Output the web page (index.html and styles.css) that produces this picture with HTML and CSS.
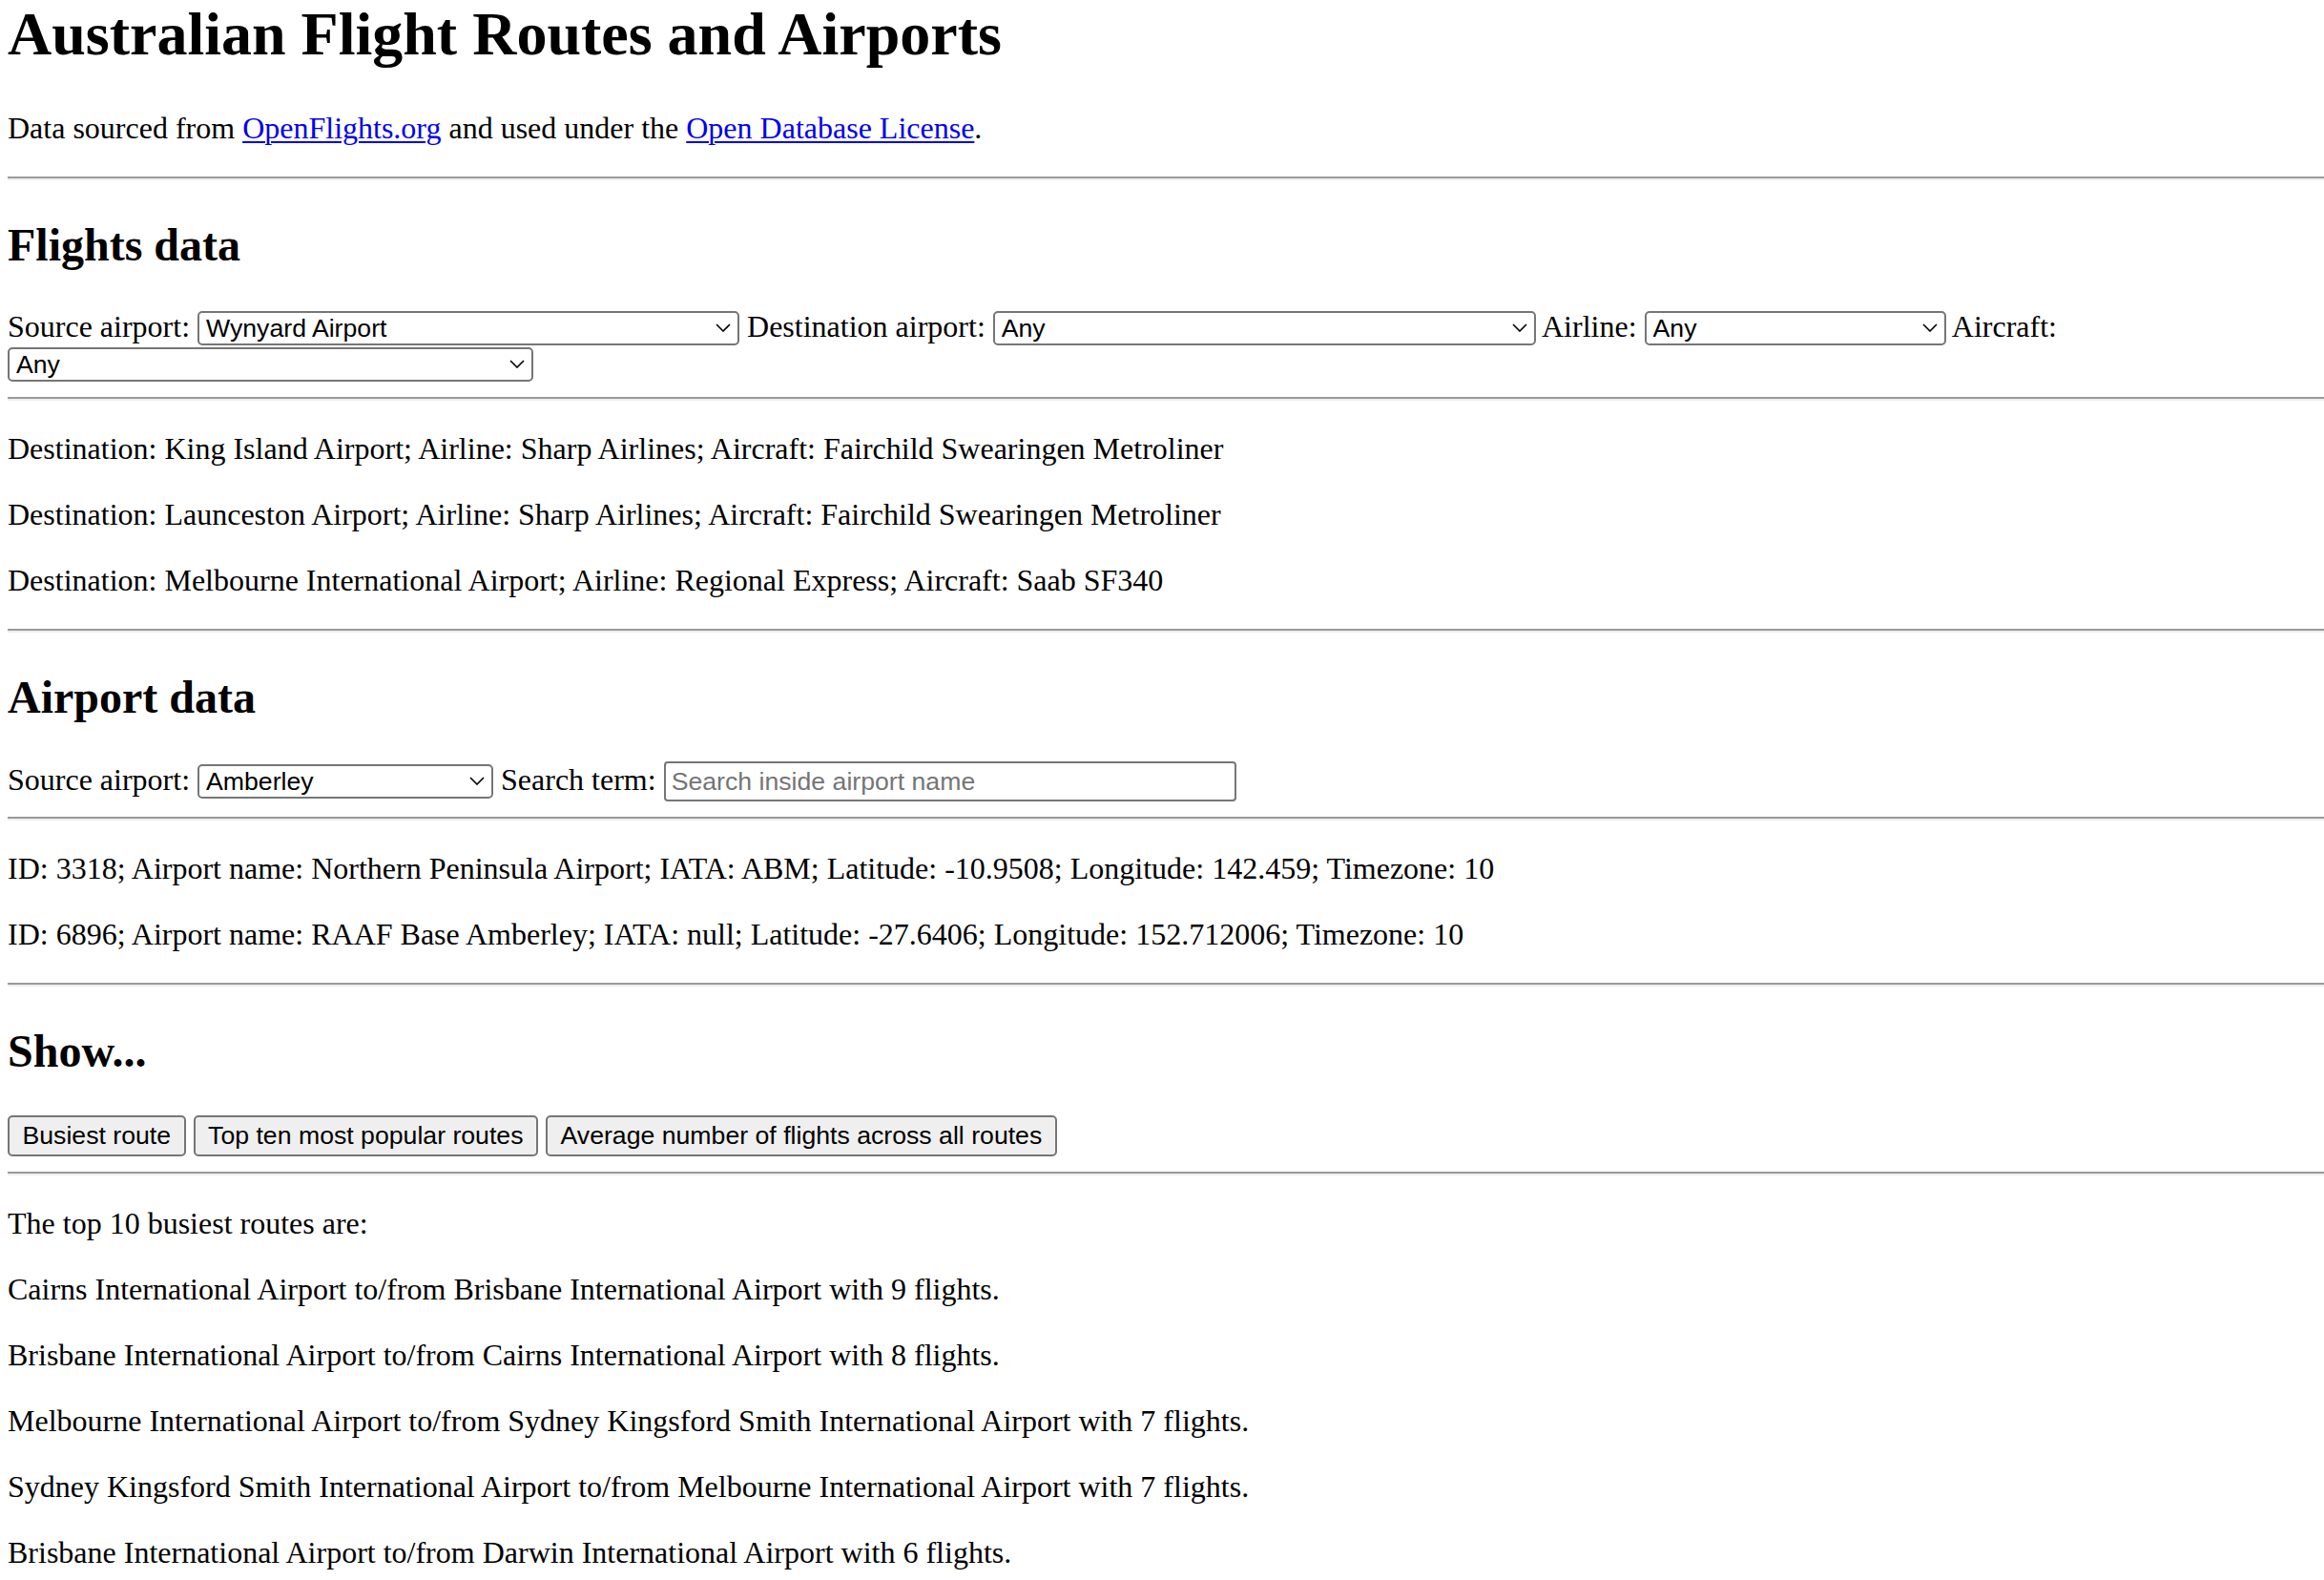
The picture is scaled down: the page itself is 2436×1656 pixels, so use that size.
FILE: index.html
```html
<!DOCTYPE html>
<html lang="en">
<head>
<meta charset="utf-8">
<title>Australian Flight Routes and Airports</title>
<link rel="stylesheet" href="styles.css">
</head>
<body>
<h1 class="title">Australian Flight Routes and Airports</h1>
<p class="para">Data sourced from <a class="link" href="#">OpenFlights.org</a> and used under the <a class="link" href="#">Open Database License</a>.</p>
<hr class="rule">
<h2 class="heading">Flights data</h2>
<div class="controls">
<label class="field">Source airport: <span class="sel w-src"><select class="dropdown"><option>Wynyard Airport</option><option>Any</option></select><svg class="chev" viewBox="0 0 16 9"><path d="M1 1 L8 8 L15 1" fill="none" stroke="#000" stroke-width="1.6"/></svg></span></label>
<label class="field">Destination airport: <span class="sel w-dst"><select class="dropdown"><option>Any</option></select><svg class="chev" viewBox="0 0 16 9"><path d="M1 1 L8 8 L15 1" fill="none" stroke="#000" stroke-width="1.6"/></svg></span></label>
<label class="field">Airline: <span class="sel w-air"><select class="dropdown"><option>Any</option></select><svg class="chev" viewBox="0 0 16 9"><path d="M1 1 L8 8 L15 1" fill="none" stroke="#000" stroke-width="1.6"/></svg></span></label>
<label class="field">Aircraft: <span class="sel w-craft"><select class="dropdown"><option>Any</option></select><svg class="chev" viewBox="0 0 16 9"><path d="M1 1 L8 8 L15 1" fill="none" stroke="#000" stroke-width="1.6"/></svg></span></label>
</div>
<hr class="rule">
<div class="results">
<p class="para">Destination: King Island Airport; Airline: Sharp Airlines; Aircraft: Fairchild Swearingen Metroliner</p>
<p class="para">Destination: Launceston Airport; Airline: Sharp Airlines; Aircraft: Fairchild Swearingen Metroliner</p>
<p class="para">Destination: Melbourne International Airport; Airline: Regional Express; Aircraft: Saab SF340</p>
</div>
<hr class="rule">
<h2 class="heading">Airport data</h2>
<div class="controls">
<label class="field">Source airport: <span class="sel w-amb"><select class="dropdown"><option>Amberley</option></select><svg class="chev" viewBox="0 0 16 9"><path d="M1 1 L8 8 L15 1" fill="none" stroke="#000" stroke-width="1.6"/></svg></span></label>
<label class="field">Search term: <input class="search" type="text" placeholder="Search inside airport name"></label>
</div>
<hr class="rule">
<div class="results">
<p class="para">ID: 3318; Airport name: Northern Peninsula Airport; IATA: ABM; Latitude: -10.9508; Longitude: 142.459; Timezone: 10</p>
<p class="para">ID: 6896; Airport name: RAAF Base Amberley; IATA: null; Latitude: -27.6406; Longitude: 152.712006; Timezone: 10</p>
</div>
<hr class="rule">
<h2 class="heading">Show...</h2>
<div class="controls">
<button class="btn" type="button">Busiest route</button>
<button class="btn" type="button">Top ten most popular routes</button>
<button class="btn" type="button">Average number of flights across all routes</button>
</div>
<hr class="rule">
<div class="results">
<p class="para">The top 10 busiest routes are:</p>
<p class="para">Cairns International Airport to/from Brisbane International Airport with 9 flights.</p>
<p class="para">Brisbane International Airport to/from Cairns International Airport with 8 flights.</p>
<p class="para">Melbourne International Airport to/from Sydney Kingsford Smith International Airport with 7 flights.</p>
<p class="para">Sydney Kingsford Smith International Airport to/from Melbourne International Airport with 7 flights.</p>
<p class="para">Brisbane International Airport to/from Darwin International Airport with 6 flights.</p>
</div>
</body>
</html>
```
FILE: styles.css
```css
html {
  background: #fff;
}

body {
  margin: 0;
  padding: 0 0 0 8px;
  font-family: "Liberation Serif", "Times New Roman", serif;
  font-size: 32px;
  color: #000;
  background: #fff;
}

.title {
  font-size: 64px;
  font-weight: bold;
  margin: -1px 0 43px;
}

.heading {
  font-size: 48px;
  font-weight: bold;
  margin: 40px 0;
}

.para {
  margin: 32px 0;
}

.link {
  color: #0000ee;
  text-decoration: underline;
  text-decoration-thickness: 2px;
  text-underline-offset: 3px;
}

.rule {
  margin: 16px 0;
  height: 0;
  border: 0;
  border-top: 2px solid #9a9a9a;
  border-bottom: 2px solid #eeeeee;
}

.controls {
  margin: 0;
}

.field {
  cursor: default;
}

.sel {
  position: relative;
  display: inline-block;
  vertical-align: baseline;
}

.dropdown {
  -webkit-appearance: none;
  appearance: none;
  box-sizing: border-box;
  width: 100%;
  height: 36px;
  margin: 0;
  padding: 0 34px 0 7px;
  font-family: "Liberation Sans", Arial, sans-serif;
  font-size: 26.67px;
  color: #000;
  background: #fff;
  border: 2px solid #767676;
  border-radius: 5px;
}

.chev {
  position: absolute;
  right: 9px;
  top: 50%;
  width: 16px;
  height: 9px;
  margin-top: -4px;
  pointer-events: none;
}

.w-src { width: 568px; }
.w-dst { width: 569px; }
.w-air { width: 316px; }
.w-craft { width: 551px; }
.w-amb { width: 310px; }

.search {
  box-sizing: border-box;
  width: 600px;
  height: 42px;
  margin: 0;
  padding: 0 6px;
  font-family: "Liberation Sans", Arial, sans-serif;
  font-size: 26.67px;
  color: #000;
  background: #fff;
  border: 2px solid #767676;
  border-radius: 4px;
}

.search::placeholder {
  color: #757575;
}

.btn {
  box-sizing: border-box;
  height: 43px;
  margin: 0;
  padding: 0 13.5px;
  font-family: "Liberation Sans", Arial, sans-serif;
  font-size: 26.67px;
  color: #000;
  background: #efefef;
  border: 2px solid #767676;
  border-radius: 5px;
}
```
